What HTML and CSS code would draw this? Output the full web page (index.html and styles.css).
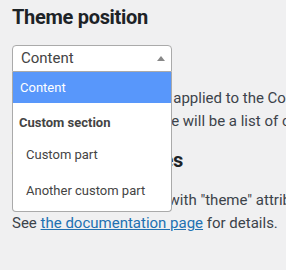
FILE: index.html
```html
<!DOCTYPE html>
<html lang="en">
<head>
<meta charset="UTF-8">
<meta name="viewport" content="width=device-width, initial-scale=1">
<title>Theme position</title>
<link rel="stylesheet" href="styles.css">
</head>
<body>

<div class="wrap">
  <h2>Theme position</h2>

  <!-- select2 style picker, opened -->
  <div class="picker">
    <div class="selection">
      <span class="selection-text">Content</span>
      <span class="arrow"></span>
    </div>
    <ul class="results">
      <li class="option highlighted">Content</li>
      <li class="group">
        <strong class="group-label">Custom section</strong>
        <ul class="sub">
          <li class="option">Custom part</li>
          <li class="option">Another custom part</li>
        </ul>
      </li>
    </ul>
  </div>

  <p>The theme you select is applied to the Content area of the page.<br>
  Beneath its content there will be a list of custom parts you can pick.</p>

  <h2 class="section">Template attributes</h2>

  <p>Mark any layout blocks with "theme" attribute to use it.<br>
  See <a href="#">the documentation page</a> for details.</p>
</div>

</body>
</html>
```

FILE: styles.css
```css
html,body{margin:0;}
body{background:#f0f0f1;color:#3c434a;font-family:Roboto,"Noto Sans",Arial,sans-serif;font-size:15px;line-height:23px;overflow:hidden;}
.wrap{width:760px;padding:0 12px;}
h2{color:#1d2327;font-size:20px;font-weight:bold;letter-spacing:-0.3px;line-height:26px;margin:0;}
.wrap > h2:first-child{padding-top:4px;}
h2.section{margin:14px 0 16px;}
p{margin:0;}
a{color:#2271b1;}

.picker{position:relative;width:160px;height:27px;margin:15px 0 15px;}
.selection{box-sizing:border-box;height:27px;background:#fff;border:1px solid #aaa;border-radius:4px 4px 0 0;display:flex;align-items:center;padding:0 6px 0 8px;}
.selection-text{flex:1;color:#444;font-size:15px;}
.arrow{width:0;height:0;border-style:solid;border-width:0 4px 5px 4px;border-color:transparent transparent #888 transparent;}

.results{position:absolute;top:27px;left:0;width:160px;box-sizing:border-box;margin:0;padding:0 0 2px;list-style:none;background:#fff;border:1px solid #aaa;border-top:none;border-radius:0 0 4px 4px;font-size:13px;line-height:normal;color:#444;z-index:2;}
.sub{list-style:none;margin:0;padding:0;}
.option{height:31px;line-height:31px;padding:0 7px;}
.highlighted{background:#5897fb;color:#fff;}
.group-label{display:block;height:34px;box-sizing:border-box;padding:5px 6px 0;line-height:30px;font-weight:bold;}
.sub .option{height:36px;line-height:36px;padding-left:13px;}
```
